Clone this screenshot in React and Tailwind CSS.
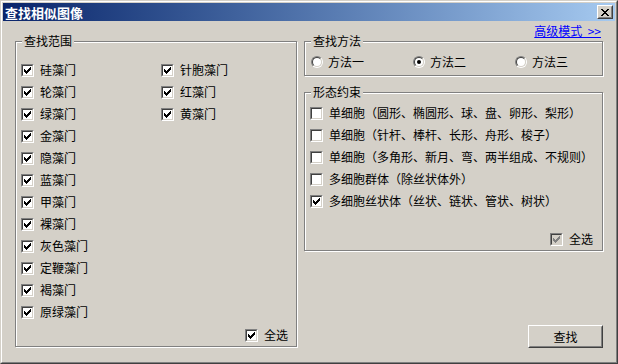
import React from "react";

function CheckMark({ color }) {
  return (
    <svg width="7" height="7" viewBox="0 0 7 7" shapeRendering="crispEdges">
      <path
        d="M0 2h1v3H0zM1 3h1v3H1zM2 4h1v3H2zM3 3h1v3H3zM4 2h1v3H4zM5 1h1v3H5zM6 0h1v3H6z"
        fill={color}
      />
    </svg>
  );
}

function Box({ checked, disabled }) {
  return (
    <span className="flex w-[13px] h-[13px] shrink-0 border border-t-[#808080] border-l-[#808080] border-r-white border-b-white">
      <span
        className={
          disabled
            ? "flex flex-1 items-center justify-center border border-t-[#404040] border-l-[#404040] border-r-[#D4D0C8] border-b-[#D4D0C8] bg-[#D4D0C8]"
            : "flex flex-1 items-center justify-center border border-t-[#404040] border-l-[#404040] border-r-[#D4D0C8] border-b-[#D4D0C8] bg-white"
        }
      >
        {checked && <CheckMark color={disabled ? "#808080" : "#000"} />}
      </span>
    </span>
  );
}

function CheckRow({ label, checked, disabled }) {
  return (
    <div className="flex h-[22px] items-center gap-[6px] whitespace-nowrap">
      <Box checked={checked} disabled={disabled} />
      <span className="leading-[14px]">{label}</span>
    </div>
  );
}

function Radio({ checked, label }) {
  return (
    <div className="flex w-[102px] items-center gap-[5px] whitespace-nowrap">
      <span className="flex w-[12px] h-[12px] shrink-0 rounded-full border border-t-[#808080] border-l-[#808080] border-r-white border-b-white">
        <span className="flex flex-1 items-center justify-center rounded-full border border-t-[#404040] border-l-[#404040] border-r-[#D4D0C8] border-b-[#D4D0C8] bg-white">
          {checked && <span className="block w-[4px] h-[4px] rounded-full bg-black" />}
        </span>
      </span>
      <span className="leading-[14px]">{label}</span>
    </div>
  );
}

function Legend({ children }) {
  return (
    <span className="absolute -top-[8px] left-[6px] px-[2px] bg-[#D4D0C8] leading-[14px] whitespace-nowrap">
      {children}
    </span>
  );
}

const col1 = [
  "硅藻门",
  "轮藻门",
  "绿藻门",
  "金藻门",
  "隐藻门",
  "蓝藻门",
  "甲藻门",
  "裸藻门",
  "灰色藻门",
  "定鞭藻门",
  "褐藻门",
  "原绿藻门",
];
const col2 = ["针胞藻门", "红藻门", "黄藻门"];

const morph = [
  ["单细胞（圆形、椭圆形、球、盘、卵形、梨形）", false],
  ["单细胞（针杆、棒杆、长形、舟形、梭子）", false],
  ["单细胞（多角形、新月、弯、两半组成、不规则）", false],
  ["多细胞群体（除丝状体外）", false],
  ["多细胞丝状体（丝状、链状、管状、树状）", true],
];

export default function App() {
  return (
    <div className="w-[618px] h-[364px] bg-[#D4D0C8] text-[12px] text-black font-['Noto_Sans_CJK_SC',sans-serif] border border-t-[#D4D0C8] border-l-[#D4D0C8] border-r-[#404040] border-b-[#404040]">
      <div className="flex flex-col h-full border border-t-white border-l-white border-r-[#808080] border-b-[#808080] p-[1px]">
        {/* Title bar */}
        <div className="flex h-[18px] items-center justify-between bg-linear-to-r from-[#0A246A] to-[#A6CAF0] pl-[2px] pr-[2px]">
          <span className="text-white font-bold leading-[15px] text-[13px]">查找相似图像</span>
          <div className="flex w-[16px] h-[14px] border border-t-white border-l-white border-r-[#404040] border-b-[#404040] bg-[#D4D0C8]">
            <div className="flex flex-1 items-center justify-center border border-t-[#D4D0C8] border-l-[#D4D0C8] border-r-[#808080] border-b-[#808080]">
              <svg width="8" height="7" viewBox="0 0 8 7" shapeRendering="crispEdges">
                <path
                  d="M0 0h2v1H0zM6 0h2v1H6zM1 1h2v1H1zM5 1h2v1H5zM2 2h4v1H2zM3 3h2v1H3zM2 4h4v1H2zM1 5h2v1H1zM5 5h2v1H5zM0 6h2v1H0zM6 6h2v1H6z"
                  fill="#000"
                />
              </svg>
            </div>
          </div>
        </div>

        {/* Content */}
        <div className="flex">
          {/* Left group */}
          <div className="relative mt-[20px] ml-[12px] flex flex-col w-[282px] h-[306px] border border-[#808080] shadow-[inset_1px_1px_0_#fff,1px_1px_0_#fff] pt-[17px] pl-[5px]">
            <Legend>查找范围</Legend>
            <div className="flex">
              <div className="flex flex-col w-[140px]">
                {col1.map((t) => (
                  <CheckRow key={t} label={t} checked />
                ))}
              </div>
              <div className="flex flex-col">
                {col2.map((t) => (
                  <CheckRow key={t} label={t} checked />
                ))}
              </div>
            </div>
            <div className="mt-auto flex justify-end pr-[8px]">
              <CheckRow label="全选" checked />
            </div>
          </div>

          {/* Right column */}
          <div className="ml-[7px] flex flex-col w-[299px]">
            <div className="flex h-[20px] justify-end pt-[3px] pr-[2px]">
              <span className="leading-[14px] text-[#0000FF] underline whitespace-pre">{"高级模式\u00a0\u00a0>>"}</span>
            </div>

            <div className="relative flex w-[299px] h-[35px] border border-[#808080] shadow-[inset_1px_1px_0_#fff,1px_1px_0_#fff] pt-[13px] pl-[6px]">
              <Legend>查找方法</Legend>
              <div className="flex h-[14px] items-center">
                <Radio label="方法一" />
                <Radio label="方法二" checked />
                <Radio label="方法三" />
              </div>
            </div>

            <div className="relative mt-[16px] flex flex-col w-[299px] h-[159px] border border-[#808080] shadow-[inset_1px_1px_0_#fff,1px_1px_0_#fff] pt-[9px] pl-[5px]">
              <Legend>形态约束</Legend>
              {morph.map(([t, c]) => (
                <CheckRow key={t} label={t} checked={c} />
              ))}
              <div className="mt-auto flex justify-end pr-[9px]">
                <CheckRow label="全选" checked disabled />
              </div>
            </div>

            <div className="mt-[74px] flex justify-end">
              <div className="flex w-[75px] h-[23px] border border-t-white border-l-white border-r-[#404040] border-b-[#404040]">
                <div className="flex flex-1 items-center justify-center border border-t-[#D4D0C8] border-l-[#D4D0C8] border-r-[#808080] border-b-[#808080] leading-[14px]">
                  查找
                </div>
              </div>
            </div>
          </div>
        </div>
      </div>
    </div>
  );
}
